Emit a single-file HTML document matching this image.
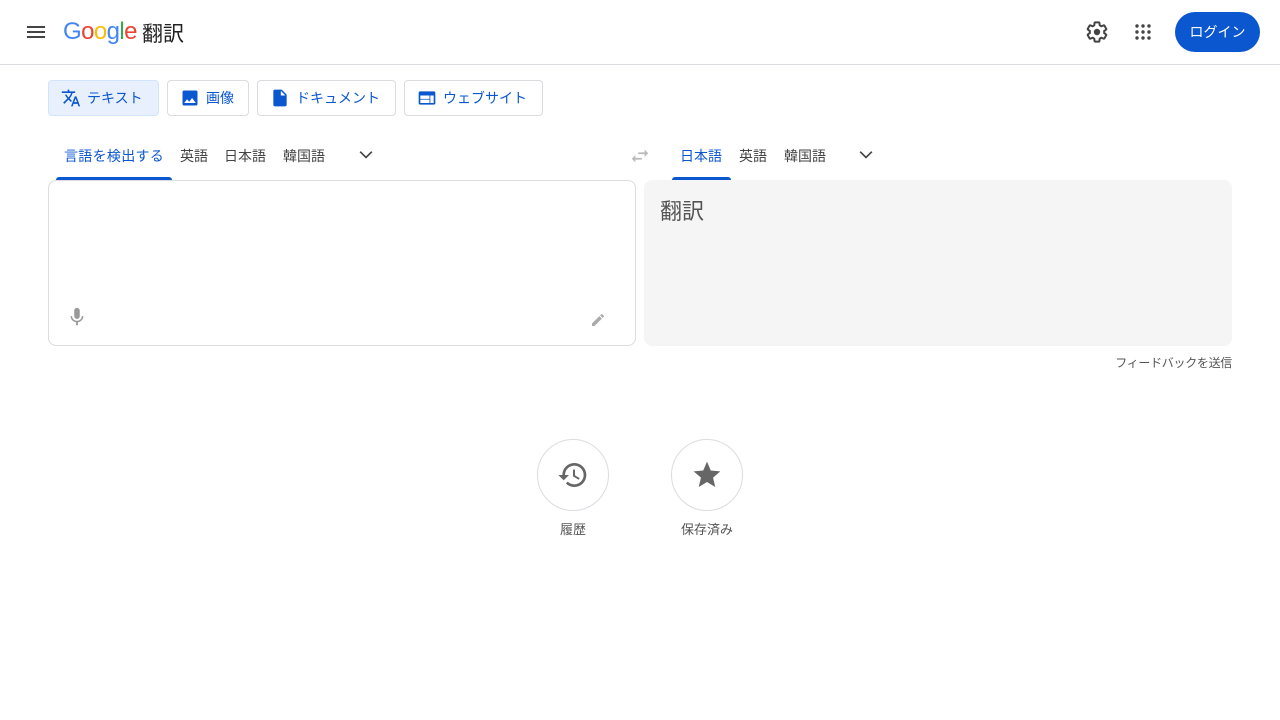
<!DOCTYPE html>
<html><head><meta charset="utf-8"><style>
*{box-sizing:border-box;margin:0;padding:0}
body{width:1280px;height:720px;background:#fff;font-family:"Liberation Sans","Noto Sans CJK JP",sans-serif;position:relative;overflow:hidden;color:#444}
.a{position:absolute}
.btn{position:absolute;top:80px;height:36px;border:1px solid #dadce0;border-radius:4px;display:flex;align-items:center;font-size:14px;color:#0b57d0;padding-left:12px}
.btn svg{margin-right:6px}
.tab{position:absolute;top:146px;font-size:14px;color:#444}
</style></head><body>
<svg class="a" style="left:24px;top:20px" width="24" height="24" viewBox="0 0 24 24"><path d="M3 18h18v-2H3v2zm0-5h18v-2H3v2zm0-7v2h18V6H3z" fill="#444"/></svg>
<div class="a" style="left:63px;top:18px;font-size:24px;letter-spacing:-0.6px"><span style="color:#4285f4">G</span><span style="color:#ea4335">o</span><span style="color:#fbbc05">o</span><span style="color:#4285f4">g</span><span style="color:#34a853">l</span><span style="color:#ea4335">e</span></div>
<div class="a" style="left:142px;top:18px;font-size:21px;color:#222">翻訳</div>
<svg class="a" style="left:1085px;top:20px" width="24" height="24" viewBox="0 0 24 24"><path fill="none" stroke="#444" stroke-width="2" d="M19.14 12.94c.04-.3.06-.61.06-.94 0-.32-.02-.64-.07-.94l2.03-1.58a.49.49 0 0 0 .12-.61l-1.92-3.32a.49.49 0 0 0-.59-.22l-2.39.96c-.5-.38-1.03-.7-1.620-.94l-.36-2.54a.48.48 0 0 0-.48-.41h-3.84c-.24 0-.43.17-.47.41l-.36 2.54c-.59.24-1.13.57-1.62.94l-2.39-.96a.49.49 0 0 0-.59.22L2.74 8.87c-.12.21-.08.47.12.61l2.03 1.58c-.05.3-.09.63-.09.94s.02.64.07.94l-2.03 1.58a.49.49 0 0 0-.12.61l1.92 3.32c.12.22.37.29.59.22l2.39-.96c.5.38 1.030.7 1.62.94l.36 2.54c.05.24.24.41.48.41h3.84c.24 0 .44-.17.47-.41l.36-2.54c.59-.24 1.13-.56 1.62-.94l2.39.96c.22.08.47 0 .59-.22l1.92-3.32c.12-.22.07-.47-.12-.61l-2.01-1.58z"/><circle cx="12" cy="12" r="3.2" fill="#444"/></svg>
<svg class="a" style="left:1131px;top:20px" width="24" height="24" viewBox="0 0 24 24" fill="#444"><circle cx="6" cy="6" r="1.7"/><circle cx="12" cy="6" r="1.7"/><circle cx="18" cy="6" r="1.7"/><circle cx="6" cy="12" r="1.7"/><circle cx="12" cy="12" r="1.7"/><circle cx="18" cy="12" r="1.7"/><circle cx="6" cy="18" r="1.7"/><circle cx="12" cy="18" r="1.7"/><circle cx="18" cy="18" r="1.7"/></svg>
<div class="a" style="left:1175px;top:12px;width:85px;height:40px;border-radius:20px;background:#0b57d0;color:#fff;font-size:14px;display:flex;align-items:center;justify-content:center">ログイン</div>
<div class="a" style="left:0;top:64px;width:1280px;height:1px;background:#dadce0"></div>

<div class="btn" style="left:48px;width:111px;background:#e8f0fe;border-color:#d2e3fc;color:#0b57d0"><svg width="20" height="20" viewBox="0 0 24 24"><path fill="#0b57d0" d="M12.87 15.07l-2.54-2.51.03-.03A17.5 17.5 0 0 0 14.07 6H17V4h-7V2H8v2H1v2h11.17C11.5 7.92 10.44 9.75 9 11.35 8.07 10.32 7.3 9.190 6.69 8h-2c.73 1.63 1.73 3.17 2.98 4.56l-5.09 5.02L4 19l5-5 3.11 3.11.76-2.04zM18.5 10h-2L12 22h2l1.12-3h4.75L21 22h2l-4.5-12zm-2.62 7l1.62-4.33L19.12 17h-3.24z"/></svg>テキスト</div>
<div class="btn" style="left:167px;width:82px"><svg width="20" height="20" viewBox="0 0 24 24"><path fill="#0b57d0" d="M21 19V5a2 2 0 0 0-2-2H5a2 2 0 0 0-2 2v14a2 2 0 0 0 2 2h14a2 2 0 0 0 2-2zM8.5 13.5l2.5 3 3.5-4.5 4.5 6H5l3.5-4.5z"/></svg>画像</div>
<div class="btn" style="left:257px;width:139px"><svg width="20" height="20" viewBox="0 0 24 24"><path fill="#0b57d0" d="M14 2H6a2 2 0 0 0-2 2v16a2 2 0 0 0 2 2h12a2 2 0 0 0 2-2V8l-6-6zm-1 7V3.5L18.5 9H13z"/></svg>ドキュメント</div>
<div class="btn" style="left:404px;width:139px"><svg width="20" height="20" viewBox="0 0 24 24"><path fill="#0b57d0" d="M20 4H4a2 2 0 0 0-2 2v12a2 2 0 0 0 2 2h16a2 2 0 0 0 2-2V6a2 2 0 0 0-2-2zm-5 14H4v-4h11v4zm0-5H4V9h11v4zm5 5h-4V9h4v9z"/></svg>ウェブサイト</div>

<div class="tab" style="left:64px;color:#0b57d0;letter-spacing:0.3px">言語を検出する</div>
<div class="a" style="left:56px;top:177px;width:116px;height:3px;background:#0b57d0;border-radius:3px 3px 0 0"></div>
<div class="tab" style="left:180px">英語</div>
<div class="tab" style="left:224px">日本語</div>
<div class="tab" style="left:283px">韓国語</div>
<svg class="a" style="left:356px;top:145px" width="20" height="20" viewBox="0 0 24 24"><path d="M5 8l7 7 7-7" stroke="#444" stroke-width="2" fill="none"/></svg>
<svg class="a" style="left:629px;top:145px" width="22" height="22" viewBox="0 0 24 24"><path fill="#bbb" d="M6.99 11L3 15l3.99 4v-3H14v-2H6.99v-3zM21 9l-3.99-4v3H10v2h7.01v3L21 9z"/></svg>
<div class="tab" style="left:680px;color:#0b57d0">日本語</div>
<div class="a" style="left:672px;top:177px;width:59px;height:3px;background:#0b57d0;border-radius:3px 3px 0 0"></div>
<div class="tab" style="left:739px">英語</div>
<div class="tab" style="left:784px">韓国語</div>
<svg class="a" style="left:856px;top:145px" width="20" height="20" viewBox="0 0 24 24"><path d="M5 8l7 7 7-7" stroke="#444" stroke-width="2" fill="none"/></svg>

<div class="a" style="left:48px;top:180px;width:588px;height:166px;border:1px solid #dadce0;border-radius:8px"></div>
<svg class="a" style="left:66px;top:306px" width="22" height="22" viewBox="0 0 24 24"><path fill="#999" d="M12 14c1.66 0 3-1.34 3-3V5c0-1.66-1.34-3-3-3S9 3.34 9 5v6c0 1.66 1.34 3 3 3zm5.3-3c0 3-2.54 5.1-5.3 5.1S6.7 14 6.7 11H5c0 3.41 2.72 6.23 6 6.72V21h2v-3.28c3.28-.48 6-3.3 6-6.72h-1.7z"/></svg>
<svg class="a" style="left:590px;top:312px" width="16" height="16" viewBox="0 0 24 24"><path fill="#aaa" d="M3 17.25V21h3.75L17.81 9.94l-3.75-3.75L3 17.25zM20.71 7.04a1 1 0 0 0 0-1.41l-2.34-2.34a1 1 0 0 0-1.41 0l-1.83 1.83 3.75 3.75 1.83-1.83z"/></svg>
<div class="a" style="left:644px;top:180px;width:588px;height:166px;background:#f5f5f5;border-radius:8px"></div>
<div class="a" style="left:660px;top:194px;font-size:22px;color:#555">翻訳</div>
<div class="a" style="left:1000px;top:354px;width:232px;text-align:right;font-size:12px;color:#555;letter-spacing:-0.3px">フィードバックを送信</div>

<div class="a" style="left:537px;top:439px;width:72px;height:72px;border:1px solid #dadce0;border-radius:50%"></div>
<svg class="a" style="left:557px;top:459px" width="32" height="32" viewBox="0 0 24 24"><path fill="#666" d="M13 3a9 9 0 0 0-9 9H1l3.89 3.89.07.14L9 12H6c0-3.87 3.13-7 7-7s7 3.13 7 7-3.13 7-7 7c-1.93 0-3.68-.79-4.94-2.06l-1.42 1.42A8.95 8.95 0 0 0 13 21a9 9 0 0 0 0-18zm-1 5v5l4.28 2.54.72-1.21-3.5-2.08V8H12z"/></svg>
<div class="a" style="left:537px;top:519px;width:72px;text-align:center;font-size:13px;color:#555">履歴</div>
<div class="a" style="left:671px;top:439px;width:72px;height:72px;border:1px solid #dadce0;border-radius:50%"></div>
<svg class="a" style="left:691px;top:459px" width="32" height="32" viewBox="0 0 24 24"><path fill="#666" d="M12 17.27L18.18 21l-1.64-7.03L22 9.24l-7.19-.61L12 2 9.19 8.63 2 9.24l5.46 4.73L5.82 21z"/></svg>
<div class="a" style="left:661px;top:519px;width:92px;text-align:center;font-size:13px;color:#555">保存済み</div>
</body></html>
